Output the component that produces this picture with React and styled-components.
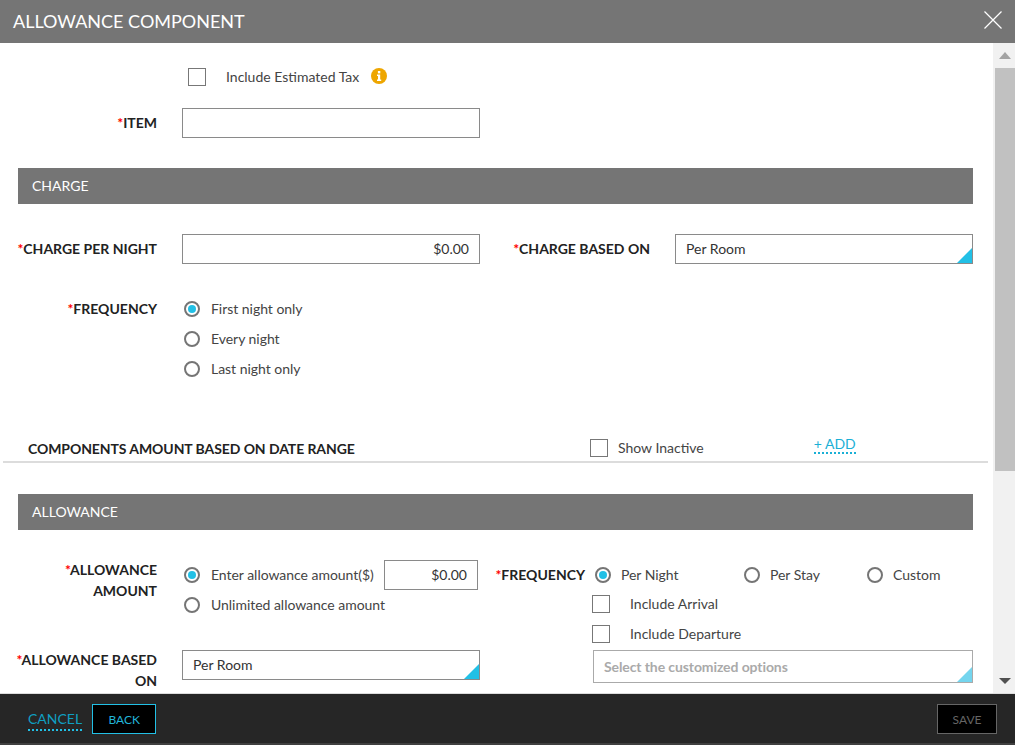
import React from 'react';
import styled, { createGlobalStyle } from 'styled-components';

const GlobalStyle = createGlobalStyle`
  html, body {
    margin: 0;
    height: 100%;
    overflow: hidden;
    background: #fff;
  }
  * {
    box-sizing: border-box;
  }
`;

const Dialog = styled.div`
  width: 1015px;
  height: 745px;
  display: flex;
  flex-direction: column;
  font-family: Lato, sans-serif;
  font-size: 14px;
  color: #333;
`;

const Header = styled.div`
  height: 43px;
  flex: none;
  display: flex;
  align-items: center;
  justify-content: space-between;
  padding: 0 13px 2px;
  background: #757575;
  color: #fff;
  font-size: 18px;
`;

const CloseIcon = styled.svg`
  width: 18px;
  height: 18px;
  margin-top: -1px;
`;

const Middle = styled.div`
  flex: 1;
  min-height: 0;
  display: flex;
`;

const Content = styled.div`
  flex: 1;
  min-width: 0;
  overflow: hidden;
  padding: 25px 0 0 3px;
`;

const Scrollbar = styled.div`
  width: 22px;
  flex: none;
  display: flex;
  flex-direction: column;
  align-items: flex-end;
  background: #f1f1f1;
`;

const ScrollThumb = styled.div`
  width: 20px;
  height: 403px;
  background: #c1c1c1;
`;

const ScrollArrow = styled.div`
  width: 0;
  height: 0;
  border-left: 6px solid transparent;
  border-right: 6px solid transparent;
  margin-right: 4px;
  ${props => (props.$up
    ? 'margin-top: 9px; margin-bottom: 9px; border-bottom: 7px solid #a3a3a3;'
    : 'margin-top: auto; margin-bottom: 9px; border-top: 6px solid #505050;')}
`;

const Row = styled.div`
  display: flex;
  align-items: ${props => props.$align || 'center'};
  margin-top: ${props => props.$top || 0}px;
  margin-left: ${props => props.$left || 0}px;
`;

const Label = styled.div`
  width: ${props => props.$width || 154}px;
  flex: none;
  text-align: right;
  color: #222;
  font-weight: 700;
  font-size: 14px;
  line-height: 21px;
  padding-bottom: 2px;
  margin-top: ${props => props.$shift || 0}px;
  margin-right: ${props => props.$gap || 25}px;
`;

const Req = styled.span`
  color: #f00;
`;

const Input = styled.div`
  width: ${props => props.$width || 298}px;
  height: 30px;
  flex: none;
  display: flex;
  align-items: center;
  justify-content: ${props => (props.$right ? 'flex-end' : 'flex-start')};
  padding: 0 10px 1px;
  border: 1px solid #8a8a8a;
  background: #fff;
  color: #333;
`;

const Select = styled(Input)`
  position: relative;
  height: ${props => props.$height || 30}px;
  color: ${props => (props.$placeholder ? '#aaa' : '#333')};
  font-weight: ${props => (props.$placeholder ? 700 : 400)};
  letter-spacing: ${props => (props.$placeholder ? '-0.1px' : '0')};
  border-color: ${props => (props.$placeholder ? '#aaa' : '#8a8a8a')};
  &::after {
    content: '';
    position: absolute;
    right: 0;
    bottom: 0;
    border-style: solid;
    border-width: 0 0 15px 15px;
    border-color: transparent transparent ${props => (props.$placeholder ? '#74d5ee' : '#22c0e6')} transparent;
  }
`;

const SectionBar = styled.div`
  width: 955px;
  height: 36px;
  margin-left: 15px;
  margin-top: ${props => props.$top || 0}px;
  display: flex;
  align-items: center;
  padding: 0 0 2px 14px;
  background: #757575;
  color: #fff;
`;

const Box = styled.span`
  display: block;
  width: 18px;
  height: 18px;
  flex: none;
  border: 1px solid #777;
  background: #fff;
`;

const CheckRow = styled.div`
  display: flex;
  align-items: center;
  margin-left: ${props => props.$left || 0}px;
  margin-top: ${props => props.$top || 0}px;
  height: 18px;
`;

const CheckText = styled.span`
  margin-left: ${props => props.$gap || 20}px;
  padding-bottom: 2px;
  color: #444;
`;

const Circle = styled.span`
  display: flex;
  align-items: center;
  justify-content: center;
  width: 16px;
  height: 16px;
  flex: none;
  border: 2px solid #757575;
  border-radius: 50%;
  background: #fff;
  &::after {
    content: '';
    display: ${props => (props.$on ? 'block' : 'none')};
    width: 8px;
    height: 8px;
    border-radius: 50%;
    background: #22c0e6;
  }
`;

const Radio = styled.div`
  display: flex;
  align-items: center;
  width: ${props => (props.$width ? `${props.$width}px` : 'auto')};
  height: 30px;
  flex: none;
`;

const RadioText = styled.span`
  margin-left: ${props => props.$gap || 11}px;
  padding-bottom: 2px;
  color: #444;
  white-space: nowrap;
  letter-spacing: -0.03px;
`;

const RadioStack = styled.div`
  display: flex;
  flex-direction: column;
  margin-left: 2px;
`;

const InfoIcon = styled.svg`
  width: 16px;
  height: 16px;
  margin-left: 12px;
  margin-top: -2px;
`;

const SubHead = styled.div`
  width: 562px;
  margin-left: 25px;
  flex: none;
  font-weight: 700;
  color: #222;
  letter-spacing: -0.08px;
`;

const InactiveToggle = styled.div`
  display: flex;
  align-items: center;
  height: 18px;
`;

const AddLink = styled.span`
  margin-left: 110px;
  margin-top: -8px;
  color: #1ab0d6;
  font-size: 14px;
  line-height: 17px;
  border-bottom: 2px dotted #1ab0d6;
`;

const Divider = styled.div`
  width: 985px;
  height: 2px;
  margin-top: 4px;
  background: #dcdcdc;
`;

const Columns = styled.div`
  display: flex;
  margin-top: 24px;
`;

const LeftColumn = styled.div`
  width: 482px;
  flex: none;
`;

const RightColumn = styled.div`
  flex: 1;
`;

const Footer = styled.div`
  height: 52px;
  flex: none;
  display: flex;
  align-items: center;
  padding: 0 18px 0 28px;
  background: #262626;
  border-top: 1px solid #ddd;
  border-bottom: 2px solid #3f3f3f;
`;

const CancelLink = styled.span`
  margin-top: 2px;
  color: #0f9fc2;
  font-size: 14px;
  line-height: 20px;
  border-bottom: 2px dotted #22c0e6;
`;

const FooterButton = styled.div`
  width: ${props => props.$width}px;
  height: 30px;
  display: flex;
  align-items: center;
  justify-content: center;
  padding-top: 1px;
  margin-left: ${props => props.$left || 0}px;
  background: #000;
  font-size: 12px;
  color: ${props => (props.$muted ? '#666' : '#22b5d9')};
  border: 1px solid ${props => (props.$muted ? '#666' : '#22c0e6')};
`;

const Spacer = styled.div`
  flex: 1;
`;

const required = text => (
  <>
    <Req>*</Req>
    {text}
  </>
);

export default function App() {
  return (
    <Dialog>
      <GlobalStyle />
      <Header>
        <span>ALLOWANCE COMPONENT</span>
        <CloseIcon viewBox="0 0 18 18">
          <path d="M0.5 0.5 L17.5 17.5 M17.5 0.5 L0.5 17.5" stroke="#fff" strokeWidth="1.2" fill="none" />
        </CloseIcon>
      </Header>
      <Middle>
        <Content>
          <CheckRow $left={185}>
            <Box />
            <CheckText>Include Estimated Tax</CheckText>
            <InfoIcon viewBox="0 0 16 16">
              <circle cx="8" cy="8" r="8" fill="#eea600" />
              <rect x="6.9" y="3" width="2.4" height="2.4" fill="#fff" />
              <path d="M6 6.6 H9.2 V11.6 H10.2 V13 H6 V11.6 H7 V8 H6 Z" fill="#fff" />
            </InfoIcon>
          </CheckRow>
          <Row $top={22}>
            <Label>{required('ITEM')}</Label>
            <Input />
          </Row>
          <SectionBar $top={30}>CHARGE</SectionBar>
          <Row $top={30}>
            <Label>{required('CHARGE PER NIGHT')}</Label>
            <Input $right>$0.00</Input>
            <Label $width={170} $gap={25}>{required('CHARGE BASED ON')}</Label>
            <Select>Per Room</Select>
          </Row>
          <Row $top={30} $align="flex-start">
            <Label $shift={4}>{required('FREQUENCY')}</Label>
            <RadioStack>
              <Radio><Circle $on /><RadioText>First night only</RadioText></Radio>
              <Radio><Circle /><RadioText>Every night</RadioText></Radio>
              <Radio><Circle /><RadioText>Last night only</RadioText></Radio>
            </RadioStack>
          </Row>
          <Row $top={55}>
            <SubHead>COMPONENTS AMOUNT BASED ON DATE RANGE</SubHead>
            <InactiveToggle>
              <Box />
              <CheckText $gap={10}>Show Inactive</CheckText>
            </InactiveToggle>
            <AddLink>+ ADD</AddLink>
          </Row>
          <Divider />
          <SectionBar $top={31}>ALLOWANCE</SectionBar>
          <Columns>
            <LeftColumn>
              <Row $align="flex-start" $top={6}>
                <Label $shift={-1}>{required('ALLOWANCE')}<br />AMOUNT</Label>
                <RadioStack>
                  <Row>
                    <Radio $width={200}><Circle $on /><RadioText>Enter allowance amount($)</RadioText></Radio>
                    <Input $right $width={94}>$0.00</Input>
                  </Row>
                  <Radio><Circle /><RadioText>Unlimited allowance amount</RadioText></Radio>
                </RadioStack>
              </Row>
              <Row $align="flex-start" $top={30}>
                <Label $shift={-1}>{required('ALLOWANCE BASED')}<br />ON</Label>
                <Select>Per Room</Select>
              </Row>
            </LeftColumn>
            <RightColumn>
              <Row $top={6}>
                <Label $width={100} $gap={10}>{required('FREQUENCY')}</Label>
                <Radio $width={149}><Circle $on /><RadioText $gap={10}>Per Night</RadioText></Radio>
                <Radio $width={123}><Circle /><RadioText $gap={10}>Per Stay</RadioText></Radio>
                <Radio><Circle /><RadioText $gap={10}>Custom</RadioText></Radio>
              </Row>
              <CheckRow $left={107} $top={5}>
                <Box />
                <CheckText>Include Arrival</CheckText>
              </CheckRow>
              <CheckRow $left={107} $top={12}>
                <Box />
                <CheckText>Include Departure</CheckText>
              </CheckRow>
              <Row $top={7} $left={108}>
                <Select $placeholder $width={380} $height={33}>Select the customized options</Select>
              </Row>
            </RightColumn>
          </Columns>
        </Content>
        <Scrollbar>
          <ScrollArrow $up />
          <ScrollThumb />
          <ScrollArrow />
        </Scrollbar>
      </Middle>
      <Footer>
        <CancelLink>CANCEL</CancelLink>
        <FooterButton $width={64} $left={10}>BACK</FooterButton>
        <Spacer />
        <FooterButton $width={60} $muted>SAVE</FooterButton>
      </Footer>
    </Dialog>
  );
}
